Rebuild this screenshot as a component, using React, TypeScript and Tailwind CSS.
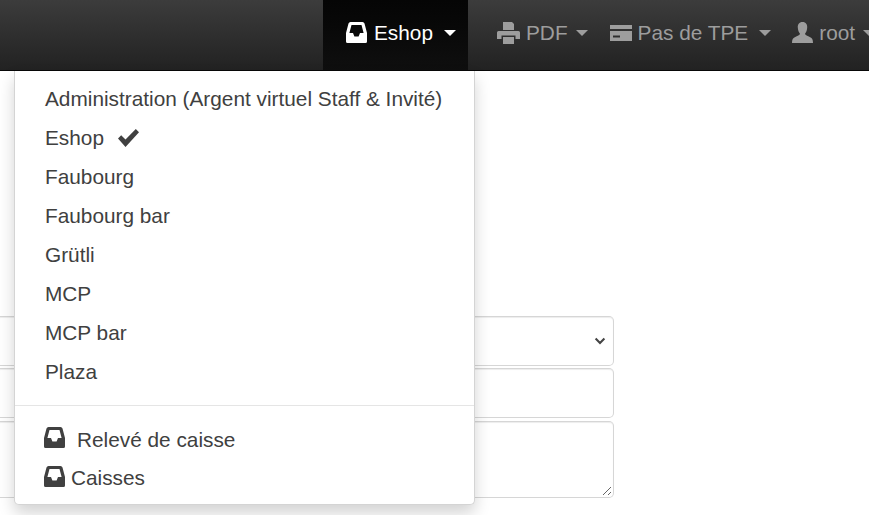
import type { ReactNode } from "react";

function InboxIcon({ className }: { className?: string }) {
  return (
    <svg viewBox="0 0 21 21" className={`shrink-0 ${className}`} fill="currentColor">
      <path
        fillRule="evenodd"
        d="M4.5 0 H16.5 Q18 0 18.5 1.5 L21 11 V19.5 Q21 21 19.5 21 H1.5 Q0 21 0 19.5 V11 L2.5 1.5 Q3 0 4.5 0 Z M5.5 3 L3.4 11 H7 L8.4 14.5 H12.6 L14 11 H17.6 L15.5 3 Z"
      />
    </svg>
  );
}

function PrintIcon({ className }: { className?: string }) {
  return (
    <svg viewBox="0 0 23 22" className={`shrink-0 ${className}`} fill="currentColor">
      <path d="M6 0 H15 L17 2 V8 H6 Z" />
      <path d="M1.5 9 H21.5 Q23 9 23 10.5 V17 H18.5 V13.5 H4.5 V17 H0 V10.5 Q0 9 1.5 9 Z" />
      <path d="M6 15 H17 V22 H6 Z" />
    </svg>
  );
}

function CardIcon({ className }: { className?: string }) {
  return (
    <svg viewBox="0 0 22 16" className={`shrink-0 ${className}`} fill="currentColor">
      <path d="M0 0 H22 V4 H0 Z" />
      <path fillRule="evenodd" d="M0 6 H22 V16 H0 Z M3 10.5 V12.5 H10 V10.5 Z" />
    </svg>
  );
}

function UserIcon({ className }: { className?: string }) {
  return (
    <svg viewBox="0 0 21 21" className={`shrink-0 ${className}`} fill="currentColor">
      <path d="M10.5 0 C14 0 15.4 2.6 15.2 5.6 C15 8.4 14.2 10.4 13 11.8 C13.2 13.4 15.6 14 18.2 15.2 C20 16 21 17.4 21 21 H0 C0 17.4 1 16 2.8 15.2 C5.4 14 7.8 13.4 8 11.8 C6.8 10.4 6 8.4 5.8 5.6 C5.6 2.6 7 0 10.5 0 Z" />
    </svg>
  );
}

function CheckIcon({ className }: { className?: string }) {
  return (
    <svg viewBox="0 0 21 18" className={className} fill="currentColor">
      <path d="M0 9.5 L3.2 6.3 L7.5 10.6 L17.8 0 L21 3.2 L7.5 18 Z" />
    </svg>
  );
}

function Caret({ className }: { className?: string }) {
  return <span className={`inline-block h-0 w-0 shrink-0 border-x-[6px] border-t-[6px] border-x-transparent ${className}`} />;
}

const shops = ["Faubourg", "Faubourg bar", "Grütli", "MCP", "MCP bar", "Plaza"];

function MenuRow({ children, className = "h-[38.9px]" }: { children: ReactNode; className?: string }) {
  return <li className={`flex items-center px-[30px] whitespace-nowrap ${className}`}>{children}</li>;
}

export default function App() {
  return (
    <div className="relative h-[515px] w-[869px] overflow-hidden bg-white font-['Liberation_Sans',Arial,sans-serif] text-[20.8px] text-[#404040]">
      {/* Navbar */}
      <nav className="flex h-[71px] justify-end overflow-hidden border-b border-[#080808] bg-gradient-to-b from-[#3c3c3c] to-[#222222] whitespace-nowrap">
        <div className="flex w-[145px] shrink-0 items-center bg-gradient-to-b from-[#050505] to-[#0f0f0f] pb-[5px] pl-[23px] text-white">
          <InboxIcon className="mr-[7px] h-[21px] w-[21px]" />
          <span>Eshop</span>
          <Caret className="ml-[11px] border-t-white" />
        </div>
        <div className="flex w-[401px] shrink-0 items-center pb-[5px] pl-[29px] text-[#9d9d9d]">
          <PrintIcon className="mr-[6px] h-[22px] w-[23px]" />
          <span>PDF</span>
          <Caret className="ml-[8px] border-t-[#9d9d9d]" />
          <CardIcon className="mr-[6px] ml-[22px] h-[16px] w-[22px]" />
          <span>Pas de TPE</span>
          <Caret className="ml-[11px] border-t-[#9d9d9d]" />
          <UserIcon className="mr-[6px] ml-[21px] h-[21px] w-[21px]" />
          <span>root</span>
          <Caret className="ml-[8px] border-t-[#9d9d9d]" />
        </div>
      </nav>

      {/* Form behind the menu */}
      <div className="mt-[245px] flex w-[614px] flex-col">
        <div className="flex h-[50px] items-center justify-end rounded-r-[5px] border border-l-0 border-[#d6d6d6] pr-[7px] shadow-[inset_0_1px_1px_rgba(0,0,0,0.075)]">
          <svg viewBox="0 0 14 10" className="h-[8px] w-[12px] text-[#444444]" fill="none" stroke="currentColor" strokeWidth="2.6">
            <path d="M1.5 2 L7 7.5 L12.5 2" />
          </svg>
        </div>
        <div className="mt-[2px] h-[50px] rounded-r-[5px] border border-l-0 border-[#d6d6d6] shadow-[inset_0_1px_1px_rgba(0,0,0,0.075)]" />
        <div className="relative mt-[3px] h-[77px] rounded-r-[5px] border border-l-0 border-[#d6d6d6] shadow-[inset_0_1px_1px_rgba(0,0,0,0.075)]">
          <svg viewBox="0 0 10 10" className="absolute right-[1px] bottom-[1px] h-[10px] w-[10px] text-[#555555]" fill="none" stroke="currentColor" strokeWidth="0.9">
            <path d="M1 9 L9 1 M6 9 L9 6" />
          </svg>
        </div>
      </div>

      {/* Dropdown menu */}
      <ul className="absolute top-[71px] left-[14px] h-[434px] w-[461px] rounded-b-[5px] border border-t-0 border-[#d4d4d4] bg-white pt-[8.5px] shadow-[0_8px_16px_rgba(0,0,0,0.175)]">
        <MenuRow>Administration (Argent virtuel Staff &amp; Invité)</MenuRow>
        <MenuRow>
          Eshop
          <CheckIcon className="ml-[14px] h-[18px] w-[21px]" />
        </MenuRow>
        {shops.map((shop) => (
          <MenuRow key={shop}>{shop}</MenuRow>
        ))}
        <li className="mt-[14px] mb-[15px] h-px bg-[#e5e5e5]" />
        <MenuRow className="h-[38px]">
          <InboxIcon className="mr-[12px] -ml-px h-[21px] w-[21px] -translate-y-[2px]" />
          Relevé de caisse
        </MenuRow>
        <MenuRow className="h-[38px]">
          <InboxIcon className="mr-[6px] -ml-px h-[21px] w-[21px] -translate-y-px" />
          Caisses
        </MenuRow>
      </ul>
    </div>
  );
}
